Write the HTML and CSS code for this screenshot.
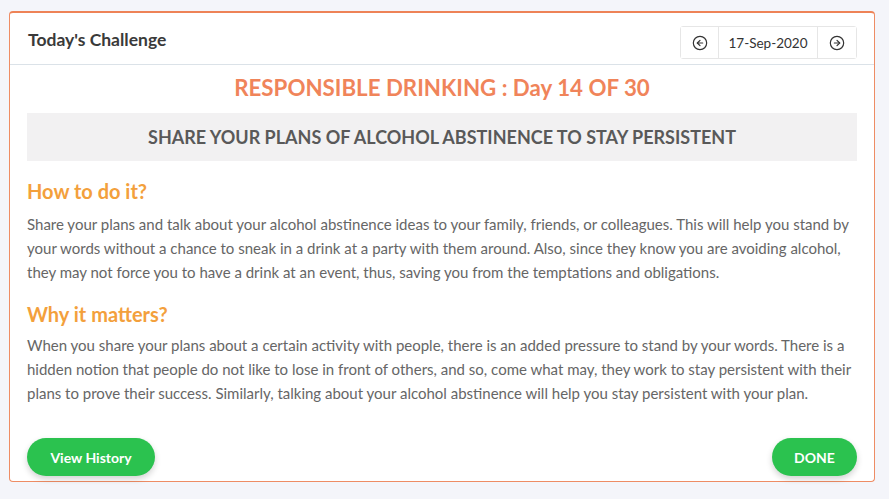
FILE: index.html
```html
<!DOCTYPE html>
<html lang="en">
<head>
<meta charset="utf-8">
<title>Today's Challenge</title>
<link rel="stylesheet" href="styles.css">
</head>
<body>
<div class="card">
  <div class="card-header">
    <h2 class="card-title">Today's Challenge</h2>
    <div class="date-nav">
      <button class="nav-btn" aria-label="Previous day">
        <svg width="16" height="16" viewBox="0 0 24 24" fill="none" stroke="#333" stroke-width="1.8" stroke-linecap="round" stroke-linejoin="round"><circle cx="12" cy="12" r="10"/><polyline points="12 8 8 12 12 16"/><line x1="16" y1="12" x2="8" y2="12"/></svg>
      </button>
      <div class="date-label">17-Sep-2020</div>
      <button class="nav-btn nav-next" aria-label="Next day">
        <svg width="16" height="16" viewBox="0 0 24 24" fill="none" stroke="#333" stroke-width="1.8" stroke-linecap="round" stroke-linejoin="round"><circle cx="12" cy="12" r="10"/><polyline points="12 16 16 12 12 8"/><line x1="8" y1="12" x2="16" y2="12"/></svg>
      </button>
    </div>
  </div>
  <div class="card-body">
    <h1 class="challenge-title">RESPONSIBLE DRINKING : Day 14 OF 30</h1>
    <div class="challenge-box">SHARE YOUR PLANS OF ALCOHOL ABSTINENCE TO STAY PERSISTENT</div>
    <h3 class="section-title">How to do it?</h3>
    <p class="section-text">Share your plans and talk about your alcohol abstinence ideas to your family, friends, or colleagues. This will help you stand by your words without a chance to sneak in a drink at a party with them around. Also, since they know you are avoiding alcohol, they may not force you to have a drink at an event, thus, saving you from the temptations and obligations.</p>
    <h3 class="section-title section-second">Why it matters?</h3>
    <p class="section-text section-text-second">When you share your plans about a certain activity with people, there is an added pressure to stand by your words. There is a hidden notion that people do not like to lose in front of others, and so, come what may, they work to stay persistent with their plans to prove their success. Similarly, talking about your alcohol abstinence will help you stay persistent with your plan.</p>
    <div class="actions">
      <button class="pill-btn history-btn">View History</button>
      <button class="pill-btn done-btn">DONE</button>
    </div>
  </div>
</div>
</body>
</html>
```

FILE: styles.css
```css
* { box-sizing: border-box; }
html, body { margin: 0; padding: 0; }
body {
  background: #f4f5fa;
  font-family: Lato, "Noto Sans", sans-serif;
  width: 889px;
  height: 499px;
  overflow: hidden;
}
.card {
  margin: 11px 14px 0 9px;
  background: #fff;
  border: 1px solid #ee8c64;
  border-top: 2px solid #ee8357;
  border-radius: 4px;
}
.card-header {
  display: flex;
  justify-content: space-between;
  align-items: center;
  padding: 13px 17px 5px 18px;
  border-bottom: 1px solid #dbe2e8;
}
.card-title {
  margin: 0 0 5px 0;
  font-size: 17.5px;
  font-weight: 700;
  color: #3a3a3a;
  line-height: 22px;
}
.date-nav {
  display: flex;
  height: 33px;
  border: 1px solid #e6e6e6;
  border-radius: 3px;
}
.nav-btn {
  width: 37px;
  height: 31px;
  border: 0;
  background: #fff;
  display: flex;
  align-items: center;
  justify-content: center;
  padding: 0;
}
.nav-next { width: 38px; }
.date-label {
  width: 100px;
  border-left: 1px solid #e6e6e6;
  border-right: 1px solid #e6e6e6;
  font-size: 13.5px;
  color: #333;
  display: flex;
  align-items: center;
  justify-content: center;
}
.card-body {
  padding: 0 17px 5px 17px;
}
.challenge-title {
  margin: 9px 0 11px;
  text-align: center;
  font-size: 22.3px;
  line-height: 28px;
  font-weight: 700;
  color: #f0845a;
}
.challenge-box {
  height: 48px;
  background: #f2f1f2;
  display: flex;
  align-items: center;
  justify-content: center;
  font-size: 18px;
  font-weight: 700;
  color: #595959;
}
.section-title {
  margin: 18px 0 0;
  font-size: 20px;
  line-height: 24px;
  font-weight: 700;
  color: #f3a03c;
}
.section-text {
  margin: 9px 0 0;
  font-size: 15px;
  line-height: 24px;
  color: #666;
}
.section-text-second { margin-top: 7px; }
.actions {
  display: flex;
  justify-content: space-between;
  margin-top: 33px;
}
.pill-btn {
  height: 38px;
  border: 0;
  border-radius: 19px;
  background: #2bc24f;
  color: #fff;
  font-family: Lato, "Noto Sans", sans-serif;
  font-size: 14px;
  font-weight: 700;
  box-shadow: 0 3px 6px rgba(0, 0, 0, 0.18);
}
.history-btn { width: 128px; }
.done-btn { width: 85px; }
```
